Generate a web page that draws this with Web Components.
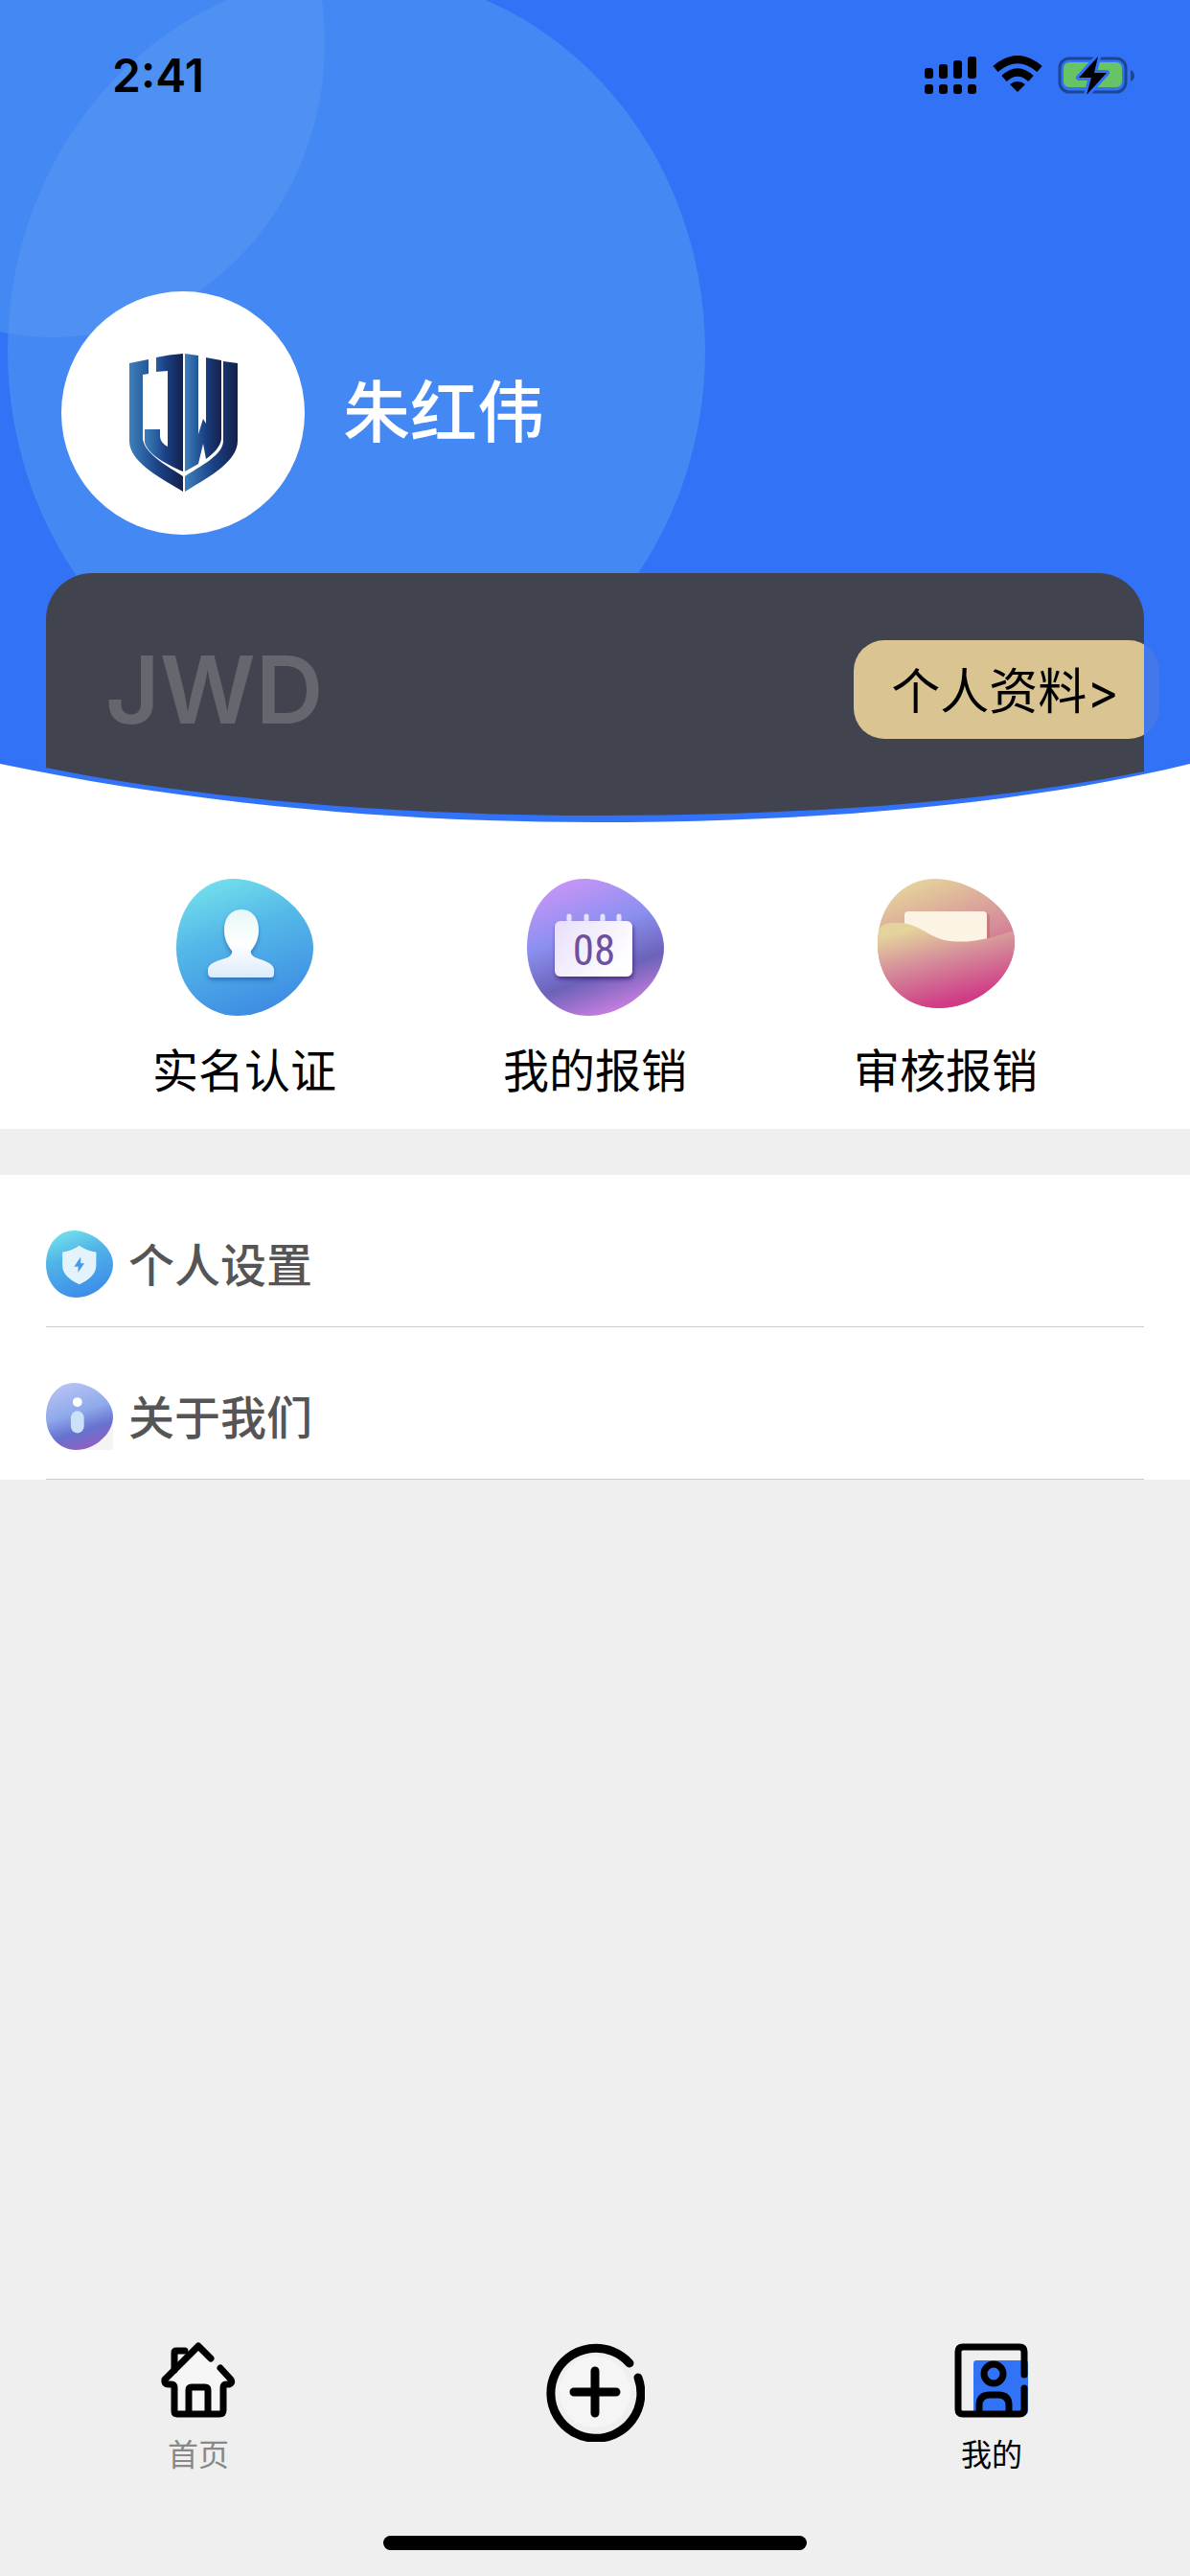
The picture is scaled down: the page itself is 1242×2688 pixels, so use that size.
<!DOCTYPE html>
<html lang="zh-CN">
<head>
<meta charset="UTF-8">
<meta name="viewport" content="width=device-width, initial-scale=1">
<title>我的</title>
<style>
  html {
    height: 100%;
  }
  body {
    margin: 0;
    min-height: 100%;
    background: #efefef;
    color: #000;
    font-family: Inter, "Noto Sans CJK SC", sans-serif;
  }
</style>
</head>
<body>
<mine-page></mine-page>

<script>
// rounded "pebble" used behind every coloured icon, 143 x 143
const BLOB = 'M60 0C96 0 143 34 143 72C143 110 102 143 64 143C28 143 0 112 0 72C0 30 26 0 60 0Z';

const ICONS = {
  person: `
    <svg viewBox="0 0 143 143" width="143" height="143">
      <defs>
        <linearGradient id="bg" x1=".25" y1="0" x2=".6" y2="1">
          <stop offset="0" stop-color="#74e0ec"/><stop offset=".4" stop-color="#54b8e8"/><stop offset="1" stop-color="#3d8be3"/>
        </linearGradient>
        <linearGradient id="fg" x1="0" y1="0" x2="0" y2="1">
          <stop offset="0" stop-color="#e6f7f8"/><stop offset=".5" stop-color="#fff"/><stop offset="1" stop-color="#dcebfa"/>
        </linearGradient>
        <filter id="sh" x="-20%" y="-20%" width="140%" height="140%">
          <feDropShadow dx="0" dy="3" stdDeviation="2" flood-color="#2263b0" flood-opacity=".7"/>
        </filter>
      </defs>
      <path d="${BLOB}" fill="url(#bg)"/>
      <path filter="url(#sh)" fill="url(#fg)" d="M68 32C79 32 86 41 86 53C86 63 82 70 78 75C77 78 79 80 82 82C90 85 102 88 102 95V99Q102 103 98 103H38Q33 103 33 98V95C33 88 45 85 54 82C57 80 59 78 58 75C54 70 50 63 50 53C50 41 57 32 68 32Z"/>
    </svg>`,
  calendar: `
    <svg viewBox="0 0 143 143" width="143" height="143">
      <defs>
        <linearGradient id="bg" x1=".3" y1="0" x2=".65" y2="1">
          <stop offset="0" stop-color="#c795f6"/><stop offset=".38" stop-color="#8b90f1"/><stop offset=".7" stop-color="#6c62b8"/><stop offset=".95" stop-color="#c07cdc"/>
        </linearGradient>
        <linearGradient id="fg" x1="0" y1="0" x2="1" y2=".6">
          <stop offset="0" stop-color="#e9defa"/><stop offset="1" stop-color="#fff"/>
        </linearGradient>
        <filter id="sh" x="-20%" y="-20%" width="140%" height="140%">
          <feDropShadow dx="1" dy="3" stdDeviation="2" flood-color="#41207c" flood-opacity=".8"/>
        </filter>
      </defs>
      <path d="${BLOB}" fill="url(#bg)"/>
      <path d="M44 46V39M62 46V39M79 46V39M96 46V39" stroke="#e9e0fb" stroke-width="5" stroke-linecap="round"/>
      <rect filter="url(#sh)" x="29" y="44" width="81" height="58" rx="6" fill="url(#fg)"/>
      <text x="70" y="90" text-anchor="middle" font-family="'Roboto Condensed', 'Liberation Sans Narrow', Roboto, sans-serif" font-size="45" fill="#6d519f">08</text>
    </svg>`,
  wallet: `
    <svg viewBox="0 0 143 143" width="143" height="143">
      <defs>
        <linearGradient id="bg" x1=".3" y1="0" x2=".7" y2="1">
          <stop offset="0" stop-color="#e5d39b"/><stop offset=".5" stop-color="#d58d9a"/><stop offset="1" stop-color="#d23b86"/>
        </linearGradient>
        <linearGradient id="fg" x1=".2" y1="0" x2=".6" y2="1">
          <stop offset=".08" stop-color="#e4d39c"/><stop offset=".45" stop-color="#d58d9a"/><stop offset=".9" stop-color="#d03d87"/>
        </linearGradient>
        <clipPath id="cp"><path d="M60 0C96 0 143 30 143 66C143 104 102 135 64 135C28 135 0 107 0 68C0 28 26 0 60 0Z"/></clipPath>
      </defs>
      <g clip-path="url(#cp)">
        <rect width="143" height="136" fill="url(#bg)"/>
        <rect x="30" y="36" width="87" height="34" rx="4" fill="#a9604f" opacity=".4"/>
        <rect x="28" y="34" width="86" height="36" rx="4" fill="#fbf4e4"/>
        <path d="M0 56Q3 46 14 46C40 44 48 57 66 63C88 69 112 64 143 54V136H0Z" fill="url(#fg)"/>
      </g>
    </svg>`,
  shield: `
    <svg viewBox="0 0 143 143" width="70" height="70">
      <defs>
        <linearGradient id="bg" x1=".25" y1="0" x2=".6" y2="1">
          <stop offset="0" stop-color="#74e0ec"/><stop offset=".4" stop-color="#4fb3e8"/><stop offset="1" stop-color="#3d8be8"/>
        </linearGradient>
      </defs>
      <path d="${BLOB}" fill="url(#bg)"/>
      <path d="M71 32Q88 44 107 46V74C107 94 90 106 71 115C52 106 35 94 35 74V46Q54 44 71 32Z" fill="#e4f2fc"/>
      <path d="M74 56L60 77H69L68 90L82 70H74Z" fill="#469be6"/>
    </svg>`,
  info: `
    <svg viewBox="0 0 143 143" width="70" height="70">
      <defs>
        <linearGradient id="bg" x1=".3" y1="0" x2=".6" y2="1">
          <stop offset="0" stop-color="#b7c3f4"/><stop offset=".45" stop-color="#8ea9ea"/><stop offset=".72" stop-color="#6672d0"/><stop offset="1" stop-color="#8f5fc0"/>
        </linearGradient>
      </defs>
      <rect x="72" y="72" width="71" height="71" fill="#f4f4f5"/>
      <path d="${BLOB}" fill="url(#bg)"/>
      <circle cx="67" cy="41" r="10" fill="#fff"/>
      <rect x="53" y="60" width="28" height="47" rx="14" fill="#cce0f8"/>
    </svg>`,
  home: `
    <svg viewBox="0 0 78 80" width="78" height="80" fill="none" stroke="#000" stroke-width="7" stroke-linecap="round" stroke-linejoin="round">
      <path d="M39 5L70 38L64 44V75H14V44L8 38Z" fill="#f6f6f6" stroke="none"/>
      <path d="M14 29V11Q14 9 16 9H25"/>
      <path d="M52 17L39 4L4 39Q3 44 8 44H11Q14 44 14 48V72Q14 75 17 75H61Q65 75 65 71V48Q65 44 68 44H71Q75 43 73 39L62 27"/>
      <path d="M29 74V50Q29 47 32 47H46Q49 47 49 50V74"/>
    </svg>`,
  plus: `
    <svg viewBox="0 0 104 104" width="104" height="104" fill="none" stroke="#000" stroke-width="9" stroke-linecap="round">
      <circle cx="52" cy="52" r="37" fill="#f5f5f5" stroke="none"/>
      <path d="M97 37A47 47 0 1 1 88 22"/>
      <path d="M30 52H74M52 30V74"/>
    </svg>`,
  mine: `
    <svg viewBox="0 0 78 80" width="78" height="80" fill="none" stroke="#000" stroke-width="7" stroke-linecap="round" stroke-linejoin="round">
      <rect x="20" y="19" width="57" height="56" rx="3" fill="#3273f6" stroke="none"/>
      <path d="M73 34V10Q73 5 68 5H9Q4 5 4 10V70Q4 75 9 75H68Q73 75 73 70V48"/>
      <circle cx="41" cy="33" r="10"/>
      <path d="M26 74V66Q26 55 37 55H46Q57 55 57 66V74"/>
    </svg>`
};

class StatusBar extends HTMLElement {
  connectedCallback() {
    this.attachShadow({ mode: 'open' });
    this.shadowRoot.innerHTML = `
      <style>
        :host {
          display: flex;
          justify-content: space-between;
          align-items: center;
          height: 60px;
          padding: 49px 56px 23px 117px;
          font-size: 48px;
          font-weight: 600;
          line-height: 60px;
        }
        .icons {
          display: flex;
          align-items: center;
          gap: 16px;
        }
        svg {
          display: block;
        }
      </style>
      <time>2:41</time>
      <div class="icons">
        <svg width="56" height="42" viewBox="0 0 56 42">
          <rect x="1" y="13" width="9" height="11" rx="3"/>
          <rect x="16" y="9" width="9" height="15" rx="3"/>
          <rect x="31" y="5" width="9" height="19" rx="3"/>
          <rect x="46" y="1" width="9" height="23" rx="3"/>
          <rect x="1" y="30" width="9" height="10" rx="3"/>
          <rect x="16" y="30" width="9" height="10" rx="3"/>
          <rect x="31" y="30" width="9" height="10" rx="3"/>
          <rect x="46" y="30" width="9" height="10" rx="3"/>
        </svg>
        <svg width="52" height="42" viewBox="0 0 52 42">
          <path d="M3 14Q26 -6 49 14M12 24Q26 11 40 24" fill="none" stroke="#000" stroke-width="8"/>
          <path d="M18 30Q26 24 34 30L26 38Z"/>
        </svg>
        <svg width="82" height="42" viewBox="0 0 82 42">
          <rect x="2" y="3" width="69" height="35" rx="10" fill="none" stroke="#1c4691" stroke-width="3"/>
          <path d="M76 15Q80 17 80 21Q80 25 76 27Z" fill="#1c4691"/>
          <rect x="6" y="7" width="61" height="26" rx="6" fill="#67c466"/>
          <path d="M42 1L22 23H35L30 41L51 18H38Z" stroke="#3172f7" stroke-width="6" stroke-linejoin="round"/>
          <path d="M42 1L22 23H35L30 41L51 18H38Z"/>
        </svg>
      </div>
    `;
  }
}
customElements.define('status-bar', StatusBar);

class UserAvatar extends HTMLElement {
  connectedCallback() {
    this.attachShadow({ mode: 'open' });
    this.shadowRoot.innerHTML = `
      <style>
        :host {
          display: block;
          width: 254px;
          height: 254px;
          border-radius: 50%;
          background: #fff;
        }
        svg {
          display: block;
        }
      </style>
      <svg viewBox="64 304 254 254" width="254" height="254">
        <defs>
          <linearGradient id="g">
            <stop offset="0" stop-color="#3d80bb"/><stop offset=".55" stop-color="#1a4085"/><stop offset="1" stop-color="#14214c"/>
          </linearGradient>
        </defs>
        <g fill="url(#g)">
          <path d="M135 379L155 375V390L149 391V458C151 474 176 487 191 497V513C170 500 135 483 135 460Z"/>
          <path d="M163 373Q176 370 191 369V492C175 485 153 474 151 461V448H167V455Q167 462 175 466V387L163 388Z"/>
          <path d="M193 369L207 371V453L212 437L215 442V373L231 376V458C230 466 224 472 215 479L212 463L207 484L193 492Z"/>
          <path d="M233 377L248 379V460C248 483 214 500 193 513V497C208 487 233 475 233 460Z"/>
        </g>
      </svg>
    `;
  }
}
customElements.define('user-avatar', UserAvatar);

class ProfileHeader extends HTMLElement {
  connectedCallback() {
    this.attachShadow({ mode: 'open' });
    this.shadowRoot.innerHTML = `
      <style>
        :host {
          display: block;
          position: relative;
          background: #3172f7;
          overflow: hidden;
        }
        .circles {
          position: absolute;
          top: 0;
          left: 0;
        }
        .content {
          position: relative;
        }
        .user {
          display: flex;
          align-items: center;
          gap: 40px;
          padding: 172px 64px 40px;
        }
        h1 {
          margin: 0;
          color: #fff;
          font-size: 70px;
          font-weight: 500;
          line-height: 96px;
        }
        .card {
          display: flex;
          justify-content: space-between;
          align-items: flex-start;
          height: 190px;
          margin: 0 48px;
          padding: 70px 0 0 62px;
          border-radius: 48px 48px 0 0;
          background: #41434e;
        }
        .brand {
          color: #64676e;
          font-size: 98px;
          font-weight: 600;
          line-height: 104px;
        }
        button {
          height: 103px;
          margin: 0 -16px 0 0;
          padding: 0 42px 4px 39px;
          border: 0;
          border-radius: 32px;
          background: linear-gradient(to right, #d9c492 calc(100% - 16px), #4377ea calc(100% - 16px));
          color: #000;
          font: inherit;
          font-size: 51px;
        }
        .curve {
          position: absolute;
          left: 0;
          bottom: 0;
          display: block;
          width: 100%;
          height: 66px;
          pointer-events: none;
        }
      </style>
      <svg class="circles" width="740" height="770" viewBox="0 0 740 770">
        <ellipse cx="372" cy="366" rx="364" ry="394" fill="#4488f3"/>
        <ellipse cx="55" cy="45" rx="284" ry="307" fill="#4488f3"/>
        <clipPath id="big"><ellipse cx="372" cy="366" rx="364" ry="394"/></clipPath>
        <ellipse cx="55" cy="45" rx="284" ry="307" fill="#4e91f2" clip-path="url(#big)"/>
      </svg>
      <div class="content">
        <slot name="status"></slot>
        <div class="user">
          <user-avatar></user-avatar>
          <h1><slot name="name"></slot></h1>
        </div>
        <div class="card">
          <span class="brand">JWD</span>
          <button type="button"><slot name="action"></slot></button>
        </div>
      </div>
      <svg class="curve" viewBox="0 0 1242 66" preserveAspectRatio="none">
        <path d="M0 0L48 9C210 42 420 59 621 59C830 59 1030 46 1194 13L1242 0V66H0Z" fill="#3172f7"/>
        <path d="M0 5C200 47 420 66 621 66C830 66 1060 50 1242 5V67H0Z" fill="#fff"/>
      </svg>
    `;
  }
}
customElements.define('profile-header', ProfileHeader);

class ShortcutItem extends HTMLElement {
  connectedCallback() {
    this.attachShadow({ mode: 'open' });
    this.shadowRoot.innerHTML = `
      <style>
        :host {
          display: block;
          flex: 1;
        }
        a {
          display: flex;
          flex-direction: column;
          align-items: center;
          gap: 26px;
          color: #000;
          font-size: 48px;
          line-height: 64px;
          text-decoration: none;
        }
        svg {
          display: block;
        }
      </style>
      <a href="#">${ICONS[this.getAttribute('icon')]}<slot></slot></a>
    `;
  }
}
customElements.define('shortcut-item', ShortcutItem);

class ShortcutBar extends HTMLElement {
  connectedCallback() {
    this.attachShadow({ mode: 'open' });
    this.shadowRoot.innerHTML = `
      <style>
        :host {
          display: flex;
          padding: 59px 72px 28px;
          background: #fff;
        }
      </style>
      <slot></slot>
    `;
  }
}
customElements.define('shortcut-bar', ShortcutBar);

class MenuItem extends HTMLElement {
  connectedCallback() {
    this.attachShadow({ mode: 'open' });
    this.shadowRoot.innerHTML = `
      <style>
        :host {
          display: block;
          padding: 0 48px;
          background: #fff;
        }
        a {
          display: flex;
          align-items: flex-start;
          gap: 16px;
          padding: 58px 0 26px;
          border-bottom: 1px solid #ccc;
          color: #555;
          font-size: 48px;
          font-weight: 500;
          line-height: 74px;
          text-decoration: none;
        }
        svg {
          display: block;
        }
      </style>
      <a href="#">${ICONS[this.getAttribute('icon')]}<slot></slot></a>
    `;
  }
}
customElements.define('menu-item', MenuItem);

class TabItem extends HTMLElement {
  connectedCallback() {
    this.attachShadow({ mode: 'open' });
    this.shadowRoot.innerHTML = `
      <style>
        :host {
          display: block;
          flex: 1;
        }
        a {
          display: flex;
          flex-direction: column;
          align-items: center;
          gap: 16px;
          color: #888;
          font-size: 32px;
          line-height: 44px;
          text-decoration: none;
        }
        :host([active]) a {
          color: #000;
        }
        svg {
          display: block;
        }
      </style>
      <a href="#" aria-label="${this.getAttribute('label') || this.textContent}">${ICONS[this.getAttribute('icon')]}<slot></slot></a>
    `;
  }
}
customElements.define('tab-item', TabItem);

class TabBar extends HTMLElement {
  connectedCallback() {
    this.attachShadow({ mode: 'open' });
    this.shadowRoot.innerHTML = `
      <style>
        :host {
          display: block;
          padding-bottom: 27px;
        }
        nav {
          display: flex;
          height: 202px;
        }
        .indicator {
          width: 442px;
          height: 15px;
          margin: 0 auto;
          border-radius: 8px;
          background: #000;
        }
      </style>
      <nav><slot></slot></nav>
      <div class="indicator"></div>
    `;
  }
}
customElements.define('tab-bar', TabBar);

class MinePage extends HTMLElement {
  connectedCallback() {
    this.attachShadow({ mode: 'open' });
    this.shadowRoot.innerHTML = `
      <style>
        :host {
          display: flex;
          flex-direction: column;
          min-height: 100vh;
        }
        main {
          flex: 1;
        }
        .menu {
          margin-top: 48px;
        }
      </style>
      <main>
        <profile-header>
          <status-bar slot="status"></status-bar>
          <span slot="name">朱红伟</span>
          <span slot="action">个人资料&gt;</span>
        </profile-header>
        <shortcut-bar>
          <shortcut-item icon="person">实名认证</shortcut-item>
          <shortcut-item icon="calendar">我的报销</shortcut-item>
          <shortcut-item icon="wallet">审核报销</shortcut-item>
        </shortcut-bar>
        <div class="menu">
          <menu-item icon="shield">个人设置</menu-item>
          <menu-item icon="info">关于我们</menu-item>
        </div>
      </main>
      <tab-bar>
        <tab-item icon="home">首页</tab-item>
        <tab-item icon="plus" label="新增"></tab-item>
        <tab-item icon="mine" active>我的</tab-item>
      </tab-bar>
    `;
  }
}
customElements.define('mine-page', MinePage);
</script>
</body>
</html>
